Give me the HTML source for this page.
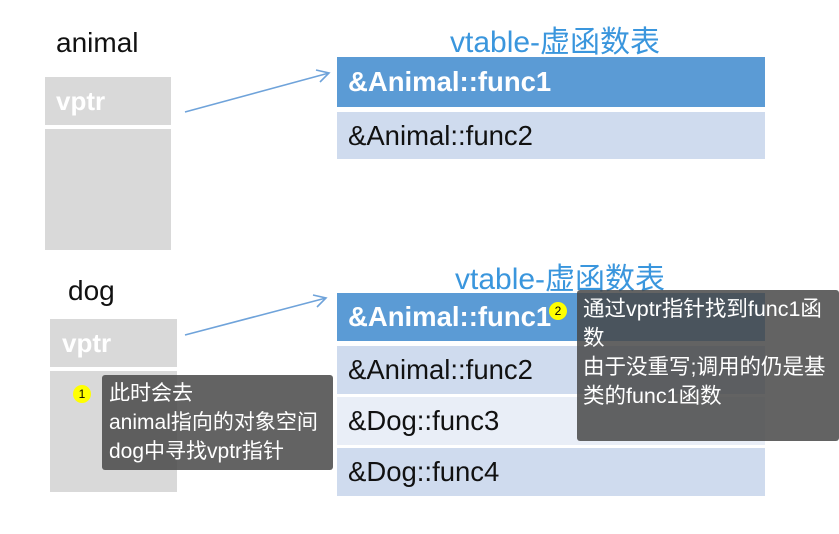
<html><head><style>
body{margin:0;width:839px;height:534px;background:#fff;position:relative;overflow:hidden;font-family:"Liberation Sans","Noto Sans CJK SC",sans-serif}
.a{position:absolute}
.lbl{font-size:28px;color:#111}
.t{font-size:30px;color:#3a96dd}
.r{position:absolute;left:337px;width:428px;font-size:27.5px;color:#111;box-sizing:border-box;padding-left:11px}
.g{position:absolute;background:#d9d9d9}
.tip{position:absolute;background:rgba(72,72,72,.85);color:#fff;border-radius:3px;font-size:21px;line-height:29px;box-sizing:border-box;white-space:nowrap}
.c{position:absolute;width:18px;height:18px;border-radius:50%;background:#ffff00;color:#000;font-size:12px;text-align:center;line-height:18px}
</style></head><body>
<div class="a lbl" style="left:56px;top:27px">animal</div>
<div class="a t" style="left:450px;top:17px">vtable-虚函数表</div>
<div class="g" style="left:45px;top:77px;width:126px;height:48px"></div>
<div class="a" style="left:56px;top:86px;color:#fff;font-size:26px;font-weight:bold">vptr</div>
<div class="g" style="left:45px;top:129px;width:126px;height:121px"></div>
<div class="r" style="top:57px;height:50px;background:#5b9bd5;color:#fff;font-weight:bold;line-height:50px">&amp;Animal::func1</div>
<div class="r" style="top:112px;height:47px;background:#cfdbee;line-height:47px">&amp;Animal::func2</div>

<div class="a lbl" style="left:68px;top:275px">dog</div>
<div class="a t" style="left:455px;top:254px">vtable-虚函数表</div>
<div class="g" style="left:50px;top:319px;width:127px;height:48px"></div>
<div class="a" style="left:62px;top:328px;color:#fff;font-size:26px;font-weight:bold">vptr</div>
<div class="g" style="left:50px;top:371px;width:127px;height:121px"></div>
<div class="r" style="top:293px;height:48px;background:#5b9bd5;color:#fff;font-weight:bold;line-height:48px">&amp;Animal::func1</div>
<div class="r" style="top:346px;height:48px;background:#cfdbee;line-height:48px">&amp;Animal::func2</div>
<div class="r" style="top:397px;height:48px;background:#e9eef7;line-height:48px">&amp;Dog::func3</div>
<div class="r" style="top:448px;height:48px;background:#cfdbee;line-height:48px">&amp;Dog::func4</div>

<svg class="a" style="left:0;top:0" width="839" height="534">
<g stroke="#6fa3da" stroke-width="1.6" fill="none">
<line x1="185" y1="112" x2="329" y2="73"/><polyline points="316,70 329,73 320,82"/>
<line x1="185" y1="335" x2="326" y2="298"/><polyline points="313,295 326,298 317,307"/>
</g></svg>

<div class="tip" style="left:102px;top:375px;width:231px;height:95px;padding:4px 0 0 7px">此时会去<br>animal指向的对象空间<br>dog中寻找vptr指针</div>
<div class="c" style="left:73px;top:385px">1</div>
<div class="tip" style="left:577px;top:290px;width:262px;height:151px;padding:5px 0 0 6px;font-size:21.5px">通过vptr指针找到func1函<br>数<br>由于没重写;调用的仍是基<br>类的func1函数</div>
<div class="c" style="left:549px;top:302px">2</div>
</body></html>
